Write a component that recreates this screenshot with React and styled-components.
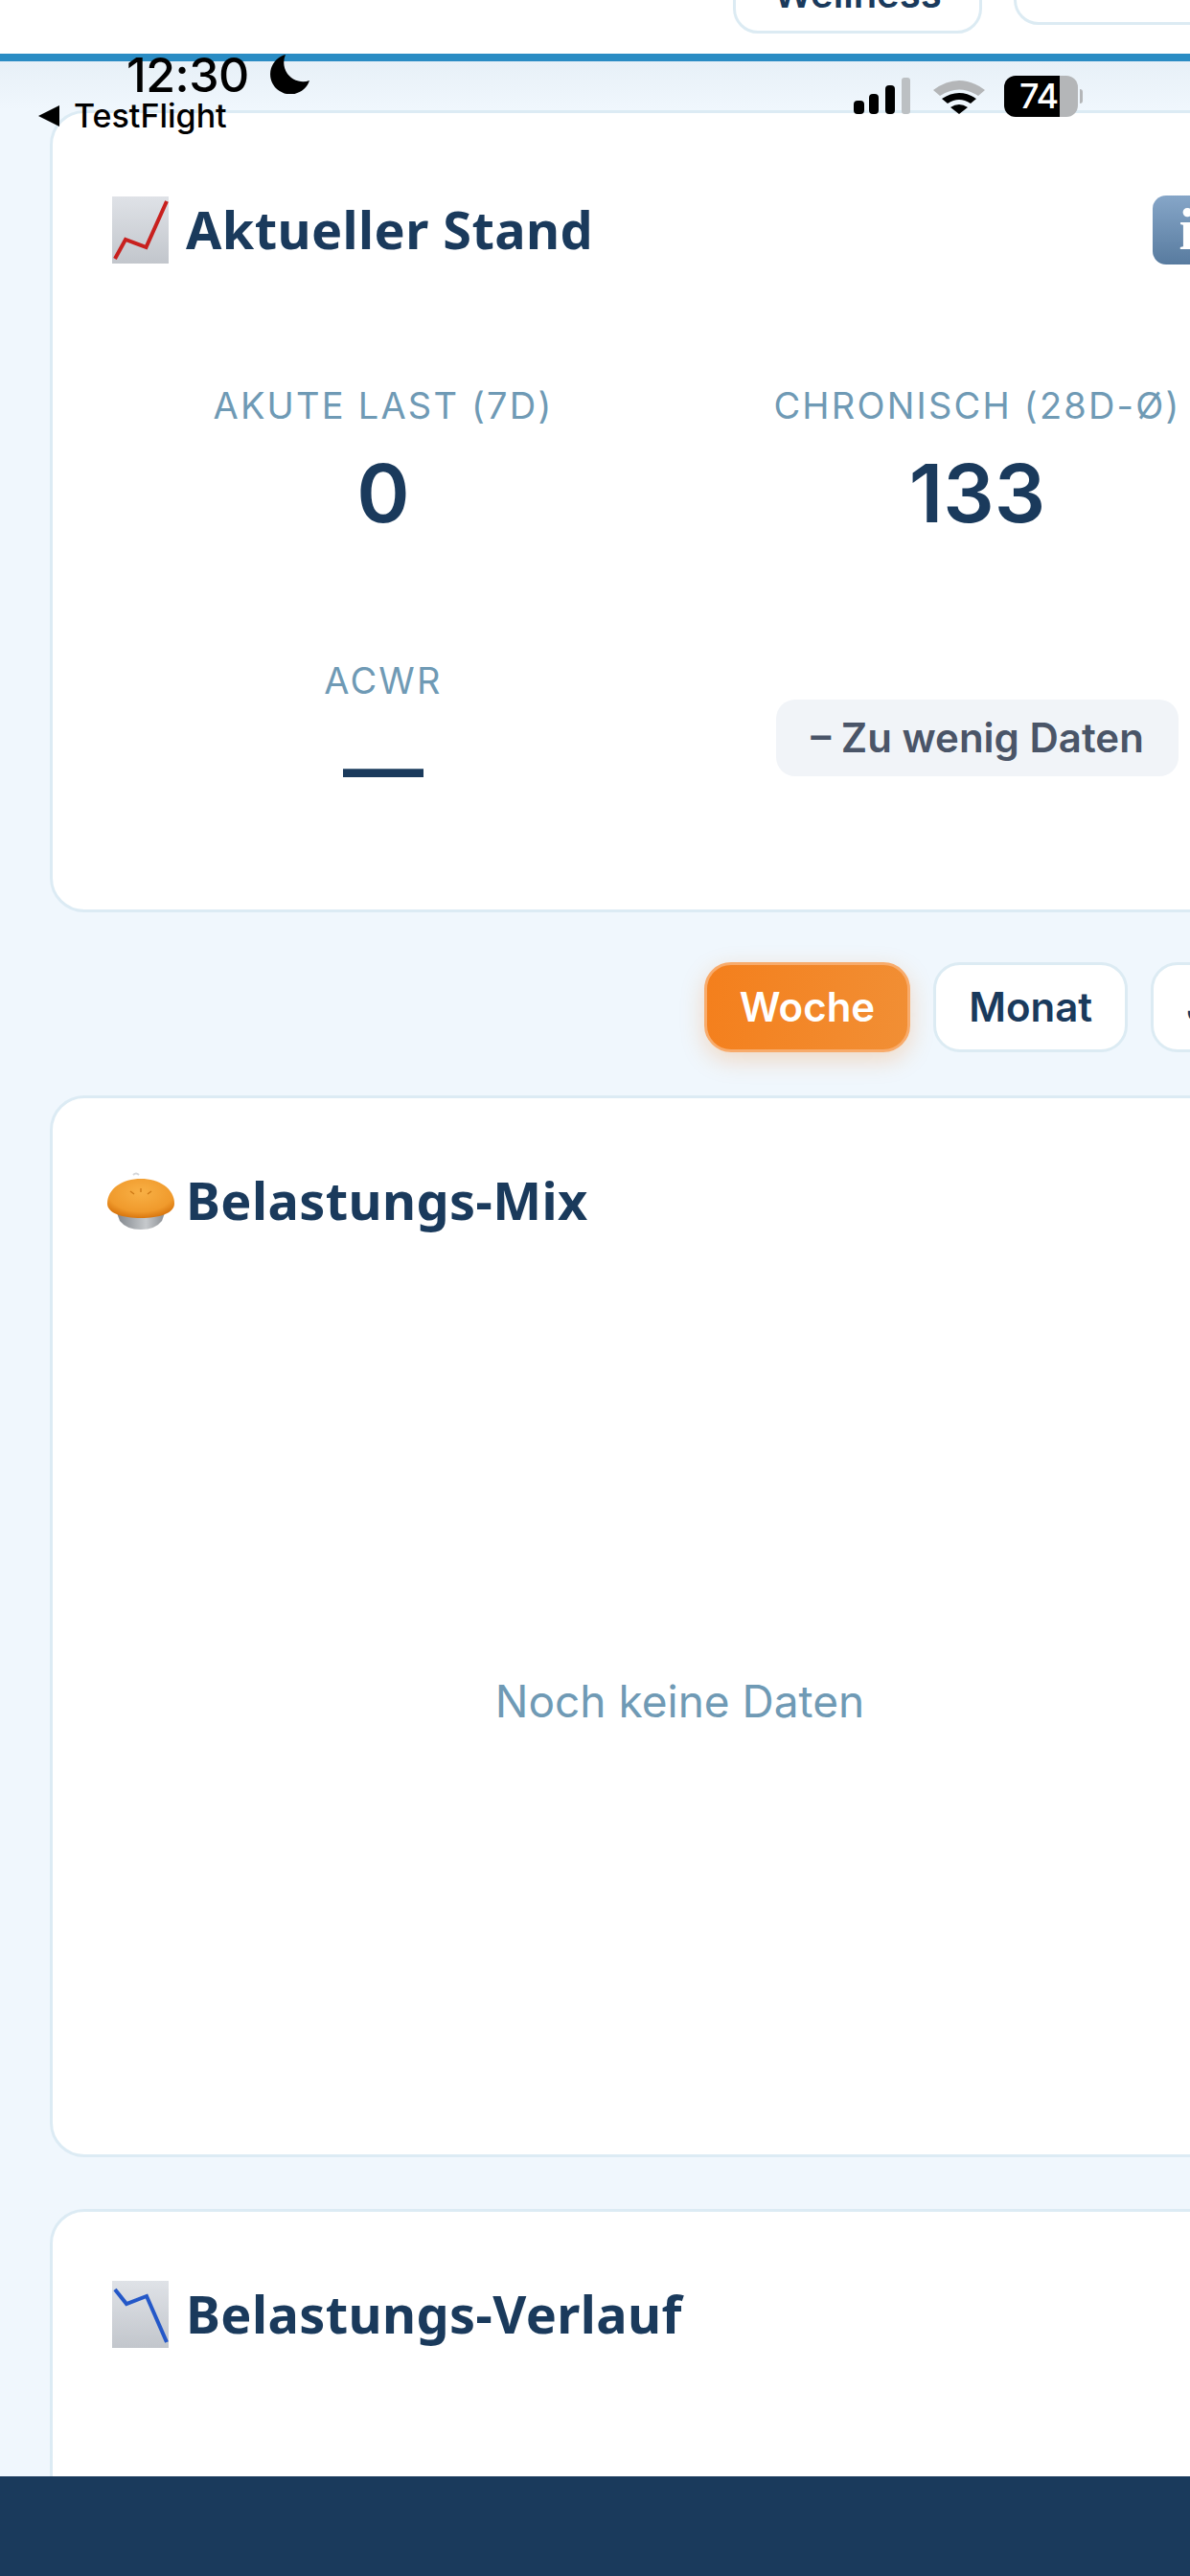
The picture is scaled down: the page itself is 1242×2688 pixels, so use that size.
import React from 'react'
import styled, { createGlobalStyle } from 'styled-components'

const navy = '#1a3a5c'

const GlobalStyle = createGlobalStyle`
  html, body {
    margin: 0;
    padding: 0;
    background: #f0f7fd;
  }
  * {
    box-sizing: border-box;
  }
`

const Screen = styled.div`
  position: relative;
  display: flex;
  flex-direction: column;
  width: 1242px;
  height: 2688px;
  overflow: hidden;
  background: #f0f7fd;
  font-family: Inter, "Liberation Sans", sans-serif;
`

const Header = styled.header`
  display: flex;
  flex: none;
  gap: 33px;
  align-items: flex-start;
  height: 64px;
  padding-left: 765px;
  overflow: hidden;
  background: #fff;
  border-bottom: 8px solid #2a8cc4;
`

const HeaderChip = styled.div`
  flex: none;
  width: ${p => p.$width}px;
  height: 80px;
  margin-top: ${p => p.$bottom - 80}px;
  border: 3px solid #dcebf3;
  border-radius: 26px;
  background: #fff;
  color: ${navy};
  font-size: 40px;
  font-weight: 600;
  line-height: 72px;
  text-align: center;
`

const Main = styled.main`
  flex: 1;
  min-height: 0;
  width: 1361px;
  padding: 51px 0 0 52px;
  overflow: hidden;
  background: linear-gradient(#e7f0f7, #f0f7fd 51px);
`

const Card = styled.section`
  display: flex;
  flex-direction: column;
  height: ${p => p.$height}px;
  margin-bottom: ${p => p.$gap || 0}px;
  padding: 70px 57px 0;
  border: 3px solid #dcebf4;
  border-radius: 36px;
  background: #fff;
`

const CardTitleRow = styled.div`
  display: flex;
  flex: none;
  gap: 12px;
  align-items: center;
  height: 73px;
  margin-top: ${p => p.$offset || 0}px;
`

const CardTitle = styled.h2`
  margin: 0;
  color: ${navy};
  font-family: "Noto Sans", Lato, sans-serif;
  font-size: 54px;
  font-weight: 700;
  letter-spacing: 0.4px;
  line-height: 73px;
  white-space: nowrap;
`

const InfoButton = styled.div`
  display: flex;
  flex: none;
  align-items: center;
  justify-content: center;
  width: 72px;
  height: 72px;
  margin-left: auto;
  margin-right: 26px;
  border-radius: 14px;
  background: linear-gradient(#86a6c8, #587b9f);
  color: #fff;
  font-family: "Liberation Serif", serif;
  font-size: 62px;
  font-weight: 700;
`

const StatsGrid = styled.div`
  display: grid;
  grid-template-columns: 572px 572px;
  column-gap: 48px;
  row-gap: 123px;
  margin: 125px 0 0 2px;
`

const Stat = styled.div`
  display: flex;
  flex-direction: column;
  align-items: center;
`

const StatLabel = styled.div`
  color: #6f9ab5;
  font-size: 38px;
  font-weight: 400;
  letter-spacing: 2.2px;
  line-height: 44px;
  white-space: nowrap;
`

const StatValue = styled.div`
  margin-top: 20px;
  color: ${navy};
  font-size: 84px;
  font-weight: 600;
  line-height: 100px;
`

const StatusPill = styled.div`
  align-self: center;
  justify-self: center;
  padding: 0 36px;
  border-radius: 20px;
  background: #f1f4f8;
  color: #4a5568;
  font-size: 42px;
  font-weight: 600;
  line-height: 80px;
  white-space: nowrap;
`

const TabRow = styled.div`
  display: flex;
  gap: 24px;
  justify-content: flex-end;
  margin: 52px -5px 45px 0;
`

const Tab = styled.div`
  flex: none;
  height: 94px;
  padding: 0 34px;
  border: 3px solid ${p => (p.$active ? '#f8ab6b' : '#dcebf3')};
  border-radius: 28px;
  background: ${p => (p.$active ? 'linear-gradient(100deg, #f47f1c, #f18f35)' : '#fff')};
  box-shadow: ${p => (p.$active ? '0 8px 24px rgba(244, 127, 28, 0.25)' : 'none')};
  color: ${p => (p.$active ? '#fff' : navy)};
  font-size: 42px;
  font-weight: 600;
  line-height: 88px;
`

const EmptyChart = styled.div`
  display: flex;
  flex: 1;
  align-items: center;
  justify-content: center;
  padding: 12px 0 0 6px;
  color: #6f9ab5;
  font-size: 46px;
`

const Footer = styled.footer`
  flex: none;
  height: 104px;
  background: ${navy};
`

const StatusBar = styled.div`
  position: absolute;
  top: 57px;
  left: 0;
  width: 1242px;
  height: 84px;
  color: #000;
  font-family: Inter, "Liberation Sans", sans-serif;
`

const Clock = styled.div`
  position: absolute;
  top: -1px;
  left: 132px;
  font-size: 50px;
  font-weight: 500;
  letter-spacing: -0.5px;
  line-height: 44px;
`

const Moon = styled.svg`
  position: absolute;
  top: 0;
  left: 281px;
`

const BackLink = styled.div`
  position: absolute;
  top: 46px;
  left: 40px;
  display: flex;
  gap: 15px;
  align-items: center;
  font-size: 34px;
  font-weight: 500;
  line-height: 36px;
`

const BackArrow = styled.span`
  width: 0;
  height: 0;
  border-top: 11px solid transparent;
  border-bottom: 11px solid transparent;
  border-right: 22px solid #000;
`

const Signal = styled.svg`
  position: absolute;
  top: 24px;
  left: 891px;
`

const Wifi = styled.svg`
  position: absolute;
  top: 25px;
  left: 974px;
`

const Battery = styled.div`
  position: absolute;
  top: 22px;
  left: 1048px;
  width: 77px;
  height: 43px;
  padding-right: 5px;
  border-radius: 12px;
  background: linear-gradient(90deg, #000 58px, #b4b6b8 58px);
  color: #fff;
  font-size: 36px;
  font-weight: 500;
  letter-spacing: -1px;
  line-height: 43px;
  text-align: center;
`

const BatteryCap = styled.span`
  position: absolute;
  top: 14px;
  right: -5px;
  width: 3px;
  height: 15px;
  border-radius: 0 3px 3px 0;
  background: #b4b6b8;
`

const ChartIcon = ({ id, points, color }) => (
  <svg width="70" height="70" viewBox="0 0 70 70">
    <defs>
      <linearGradient id={id} x1="0" y1="0" x2="0" y2="1">
        <stop offset="0" stopColor="#dfe2e7" />
        <stop offset="1" stopColor="#c2c6cc" />
      </linearGradient>
    </defs>
    <rect x="5" y="0" width="59" height="70" fill={`url(#${id})`} />
    <polyline points={points} fill="none" stroke={color} strokeWidth="4" />
  </svg>
)

const PieIcon = () => (
  <svg width="70" height="70" viewBox="0 0 70 70">
    <defs>
      <radialGradient id="pieCrust" cx="0.5" cy="0.35" r="0.65">
        <stop offset="0" stopColor="#f8b045" />
        <stop offset="0.75" stopColor="#f09a2c" />
        <stop offset="1" stopColor="#d9770f" />
      </radialGradient>
      <linearGradient id="pieTin" x1="0" y1="0" x2="1" y2="0">
        <stop offset="0" stopColor="#7d8288" />
        <stop offset="0.6" stopColor="#c6c9cc" />
        <stop offset="1" stopColor="#85898e" />
      </linearGradient>
    </defs>
    <path d="M8 42 L62 42 L57 56 Q50 65 35 65 Q20 65 13 56 Z" fill="url(#pieTin)" />
    <path d="M0 38 C0 22 16 12 35 12 C54 12 70 22 70 38 C70 48 54 53 35 53 C16 53 0 48 0 38 Z" fill="url(#pieCrust)" />
    <path d="M24 25 l4 3 M35 22 v4 M46 25 l-4 3" stroke="#cf7a17" strokeWidth="1.4" />
    <path d="M27 8 q3 -3 6 0" fill="none" stroke="#d5d7da" strokeWidth="2" />
  </svg>
)

const App = () => (
  <Screen>
    <GlobalStyle />
    <Header>
      <HeaderChip $width={260} $bottom={35}>Wellness</HeaderChip>
      <HeaderChip $width={240} $bottom={26} />
    </Header>

    <Main>
      <Card $height={837}>
        <CardTitleRow $offset={15}>
          <ChartIcon id="chartUp" points="8,65 19,45 40.5,53 62,5" color="#c8201e" />
          <CardTitle>Aktueller Stand</CardTitle>
          <InfoButton>i</InfoButton>
        </CardTitleRow>
        <StatsGrid>
          <Stat>
            <StatLabel>AKUTE LAST (7D)</StatLabel>
            <StatValue>0</StatValue>
          </Stat>
          <Stat>
            <StatLabel>CHRONISCH (28D-Ø)</StatLabel>
            <StatValue>133</StatValue>
          </Stat>
          <Stat>
            <StatLabel>ACWR</StatLabel>
            <StatValue>—</StatValue>
          </Stat>
          <StatusPill>– Zu wenig Daten</StatusPill>
        </StatsGrid>
      </Card>

      <TabRow>
        <Tab $active>Woche</Tab>
        <Tab>Monat</Tab>
        <Tab>Jahr</Tab>
      </TabRow>

      <Card $height={1108} $gap={54}>
        <CardTitleRow>
          <PieIcon />
          <CardTitle>Belastungs-Mix</CardTitle>
        </CardTitleRow>
        <EmptyChart>Noch keine Daten</EmptyChart>
      </Card>

      <Card $height={600}>
        <CardTitleRow>
          <ChartIcon id="chartDown" points="8,9 20,24 41,16 62,64" color="#2458c8" />
          <CardTitle>Belastungs-Verlauf</CardTitle>
        </CardTitleRow>
      </Card>
    </Main>

    <Footer />

    <StatusBar>
      <Clock>12:30</Clock>
      <Moon width="42" height="41" viewBox="0 0 42 41">
        <path d="M17 0 A21 21 0 1 0 42 27 A20 20 0 0 1 17 0 Z" fill="#000" />
      </Moon>
      <BackLink>
        <BackArrow />
        TestFlight
      </BackLink>
      <Signal width="60" height="38" viewBox="0 0 60 38">
        <rect x="0" y="24" width="11" height="14" rx="4" fill="#000" />
        <rect x="16" y="17" width="10" height="21" rx="4" fill="#000" />
        <rect x="33" y="8" width="10" height="30" rx="4" fill="#000" />
        <rect x="50" y="0" width="9" height="38" rx="3" fill="#bcc0c3" />
      </Signal>
      <Wifi width="54" height="38" viewBox="0 0 54 38">
        <path d="M0 12 Q27 -8 54 12 L47 18 Q27 5 7 18 Z" fill="#b4b6b8" />
        <path d="M9 21 Q27 9 45 21 L39 26 Q27 18 15 26 Z" fill="#000" />
        <path d="M18 30 Q27 24 36 30 L27 37 Z" fill="#000" />
      </Wifi>
      <Battery>
        74
        <BatteryCap />
      </Battery>
    </StatusBar>
  </Screen>
)

export default App
